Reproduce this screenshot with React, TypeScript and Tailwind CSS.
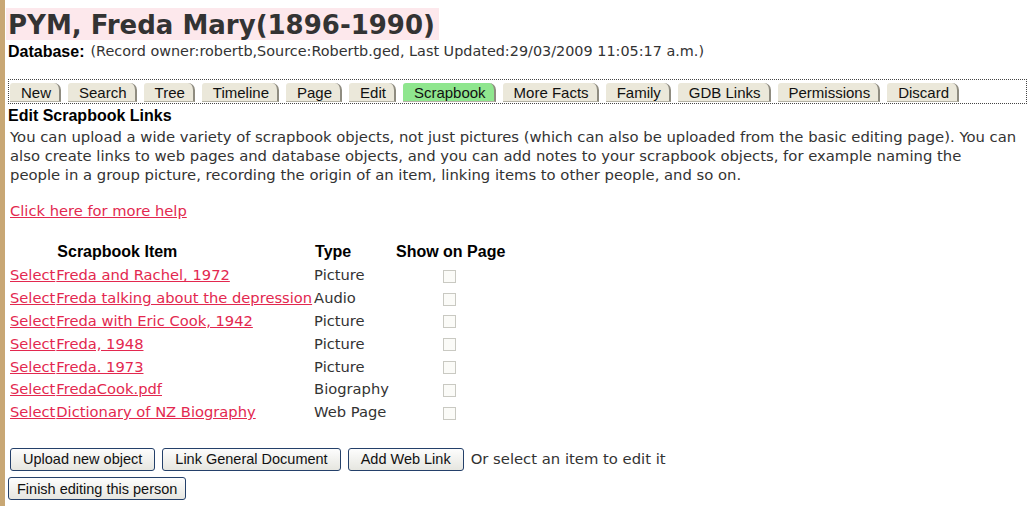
const tabs = ['New', 'Search', 'Tree', 'Timeline', 'Page', 'Edit', 'Scrapbook', 'More Facts', 'Family', 'GDB Links', 'Permissions', 'Discard']

const items = [
  { name: 'Freda and Rachel, 1972', type: 'Picture' },
  { name: 'Freda talking about the depression', type: 'Audio' },
  { name: 'Freda with Eric Cook, 1942', type: 'Picture' },
  { name: 'Freda, 1948', type: 'Picture' },
  { name: 'Freda. 1973', type: 'Picture' },
  { name: 'FredaCook.pdf', type: 'Biography' },
  { name: 'Dictionary of NZ Biography', type: 'Web Page' },
]

const verdana = "font-['DejaVu_Sans',Verdana,sans-serif]"
const arial = "font-['Liberation_Sans',Arial,sans-serif]"

function Tab({ label }: { label: string }) {
  const active = label === 'Scrapbook'
  return (
    <span
      className={`flex h-[19px] items-center rounded-tl-[3px] rounded-tr-[7px] border-r-2 border-b border-r-[#8f8c80] border-b-[#b5b2a5] pl-[11px] pr-[8px] text-[15px] leading-none text-[#111] ${
        active ? 'bg-[#8fe68e]' : 'bg-[#ebe8da]'
      }`}
    >
      {label}
    </span>
  )
}

function Button({ children, className = 'px-[12px]' }: { children: string; className?: string }) {
  return (
    <button
      className={`h-[23px] rounded-[3px] border border-[#24406a] bg-gradient-to-b from-[#fdfdfd] to-[#e6e6e0] text-[14.5px] leading-none text-[#111] ${className}`}
    >
      {children}
    </button>
  )
}

export default function App() {
  return (
    <div className={`flex min-h-[506px] bg-white ${arial}`}>
      <div aria-hidden="true" className="w-[5px] shrink-0 bg-[#c8a774]" />

      <div className="flex-1 pl-[3px] pr-[5px]">
        {/* Heading */}
        <div className="flex pt-[8px]">
          <h1 className={`-ml-[2px] h-[32px] bg-[#fde8ec] pl-[2px] pr-[4px] pt-[3px] text-[26px] font-bold leading-[29px] text-[#333] ${verdana}`}>
            PYM, Freda Mary(1896-1990)
          </h1>
        </div>
        <div className="flex h-[22px] items-center pt-[1px]">
          <span className="text-[16px] font-bold text-black">Database:</span>
          <span className={`ml-[6px] text-[14.4px] text-[#333] ${verdana}`}>
            (Record owner:robertb,Source:Robertb.ged, Last Updated:29/03/2009 11:05:17 a.m.)
          </span>
        </div>

        {/* Tabs */}
        <nav className="mt-[17px] flex h-[25px] items-end gap-[7px] border border-dotted border-[#444] pb-[1px] pl-[1px]">
          {tabs.map((t) => (
            <Tab key={t} label={t} />
          ))}
        </nav>

        <h2 className="h-[23px] text-[16px] font-bold leading-[24px] text-black">Edit Scrapbook Links</h2>
        <p className={`whitespace-nowrap pl-[2px] text-[14.8px] leading-[19px] text-[#333] ${verdana}`}>
          You can upload a wide variety of scrapbook objects, not just pictures (which can also be uploaded from the basic editing page). You can
          <br />
          also create links to web pages and database objects, and you can add notes to your scrapbook objects, for example naming the
          <br />
          people in a group picture, recording the origin of an item, linking items to other people, and so on.
        </p>
        <a href="#" className={`mt-[17px] ml-[2px] block h-[19px] text-[14.7px] leading-[19px] text-[#e3284f] underline ${verdana}`}>
          Click here for more help
        </a>

        {/* Items table */}
        <table className="mt-[20px] ml-[2px] border-collapse">
          <thead>
            <tr className="h-[24px] text-[16px] font-bold text-black">
              <th />
              <th className="pl-[1px] text-left">Scrapbook Item</th>
              <th className="pl-[1px] text-left">Type</th>
              <th className="pl-[3px]">Show on Page</th>
            </tr>
          </thead>
          <tbody className={`text-[14.7px] ${verdana}`}>
            {items.map((it) => (
              <tr key={it.name} className="h-[22.8px]">
                <td className="p-0 pr-[1px]">
                  <a href="#" className="text-[#e3284f] underline">Select</a>
                </td>
                <td className="p-0 pr-[2px]">
                  <a href="#" className="text-[#e3284f] underline">{it.name}</a>
                </td>
                <td className="p-0 pr-[4px] text-[#333]">{it.type}</td>
                <td className="p-0 text-center">
                  <span className="inline-block h-[13px] w-[13px] border border-[#c9c9c2] bg-[#fbfbf8] align-middle" />
                </td>
              </tr>
            ))}
          </tbody>
        </table>

        {/* Actions */}
        <div className="mt-[24px] flex items-center gap-[7px] pl-[2px]">
          <Button>Upload new object</Button>
          <Button>Link General Document</Button>
          <Button>Add Web Link</Button>
          <span className={`text-[14.8px] text-[#333] ${verdana}`}>Or select an item to edit it</span>
        </div>
        <div className="mt-[6px]">
          <Button className="px-[8px]">Finish editing this person</Button>
        </div>
      </div>
    </div>
  )
}
